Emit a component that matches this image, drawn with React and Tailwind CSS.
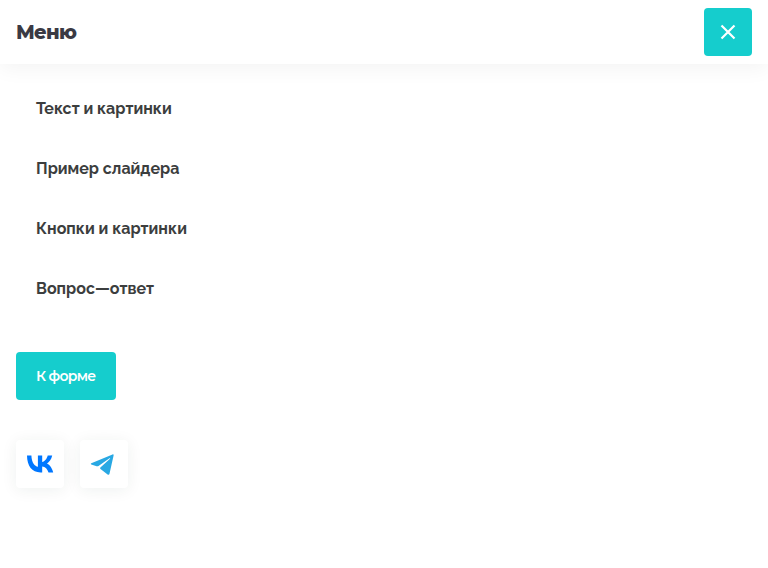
const links = ["Текст и картинки", "Пример слайдера", "Кнопки и картинки", "Вопрос—ответ"];

function VkIcon() {
  return (
    <svg className="h-7 w-7" viewBox="0 0 28 28" fill="#0077FF">
      <path d="M16.200 22.400h-1.700C6 22.400 1.100 16 1 5.500h4.400c.2 7.500 3.500 10.600 6.500 11.300V5.500h4.300v6.400c2.500-.3 4.700-3.100 5.500-6.400h4.500c-.7 3.800-3.300 6.600-5.200 7.900 1.900.9 4.900 3.600 6.200 9h-4.700c-1-3.200-3.300-5.600-6.300-5.900z" />
    </svg>
  );
}

function TelegramIcon() {
  return (
    <svg className="h-7 w-7" viewBox="0 0 28 28" fill="#28A8E3">
      <path d="M22.500 4.400L1.300 13.300c-.6.300-.6.900 0 1.200l5.300 1.700c.8.200 1.300.1 1.900-.3L19.500 8.300c.5-.3.900.1.5.5l-9.600 8.700c-.5.500-.4 1 .1 1.400l7.100 5.600c.8.600 1.700.3 1.900-.8L23.600 5.400c.1-.8-.4-1.300-1.100-1z" />
    </svg>
  );
}

export default function App() {
  return (
    <div className="h-[568px] w-full overflow-hidden bg-white font-['Raleway','Open_Sans',sans-serif] text-[#3c3e3e]">
      <header className="flex h-16 items-center justify-between px-4 shadow-[0_4px_20px_rgba(0,20,10,0.05)]">
        <h1 className="pt-0.5 font-['Montserrat','Raleway','Open_Sans',sans-serif] text-[19.500px] font-extrabold tracking-[-0.7px] text-[#3a3a44]">Меню</h1>
        <button aria-label="Закрыть" className="flex h-12 w-12 items-center justify-center rounded bg-[#15cdcd]">
          <svg className="h-4 w-4" viewBox="0 0 16 16" stroke="white" strokeWidth="2.200" fill="none"><path d="M1.500 1.500l13 13M14.500 1.500l-13 13" /></svg>
        </button>
      </header>
      <nav className="flex flex-col gap-3 pt-5">
        {links.map((label) => (
          <a key={label} className="flex h-12 items-center pt-0.5 pl-9 text-base font-bold antialiased">{label}</a>
        ))}
      </nav>
      <button className="mt-10 ml-4 flex h-12 w-[100px] items-center rounded bg-[#15cdcd] pl-5 font-['Montserrat','Raleway','Open_Sans',sans-serif] text-sm font-semibold tracking-[-0.7px] whitespace-nowrap text-white">К форме</button>
      <div className="mt-10 ml-4 flex gap-4">
        <a aria-label="VK" className="flex h-12 w-12 items-center justify-center rounded bg-white shadow-[0_2px_16px_rgba(0,60,40,0.07)]"><VkIcon /></a>
        <a aria-label="Telegram" className="flex h-12 w-12 items-center rounded bg-white pl-2.5 shadow-[0_2px_16px_rgba(0,60,40,0.07)]"><TelegramIcon /></a>
      </div>
    </div>
  );
}
